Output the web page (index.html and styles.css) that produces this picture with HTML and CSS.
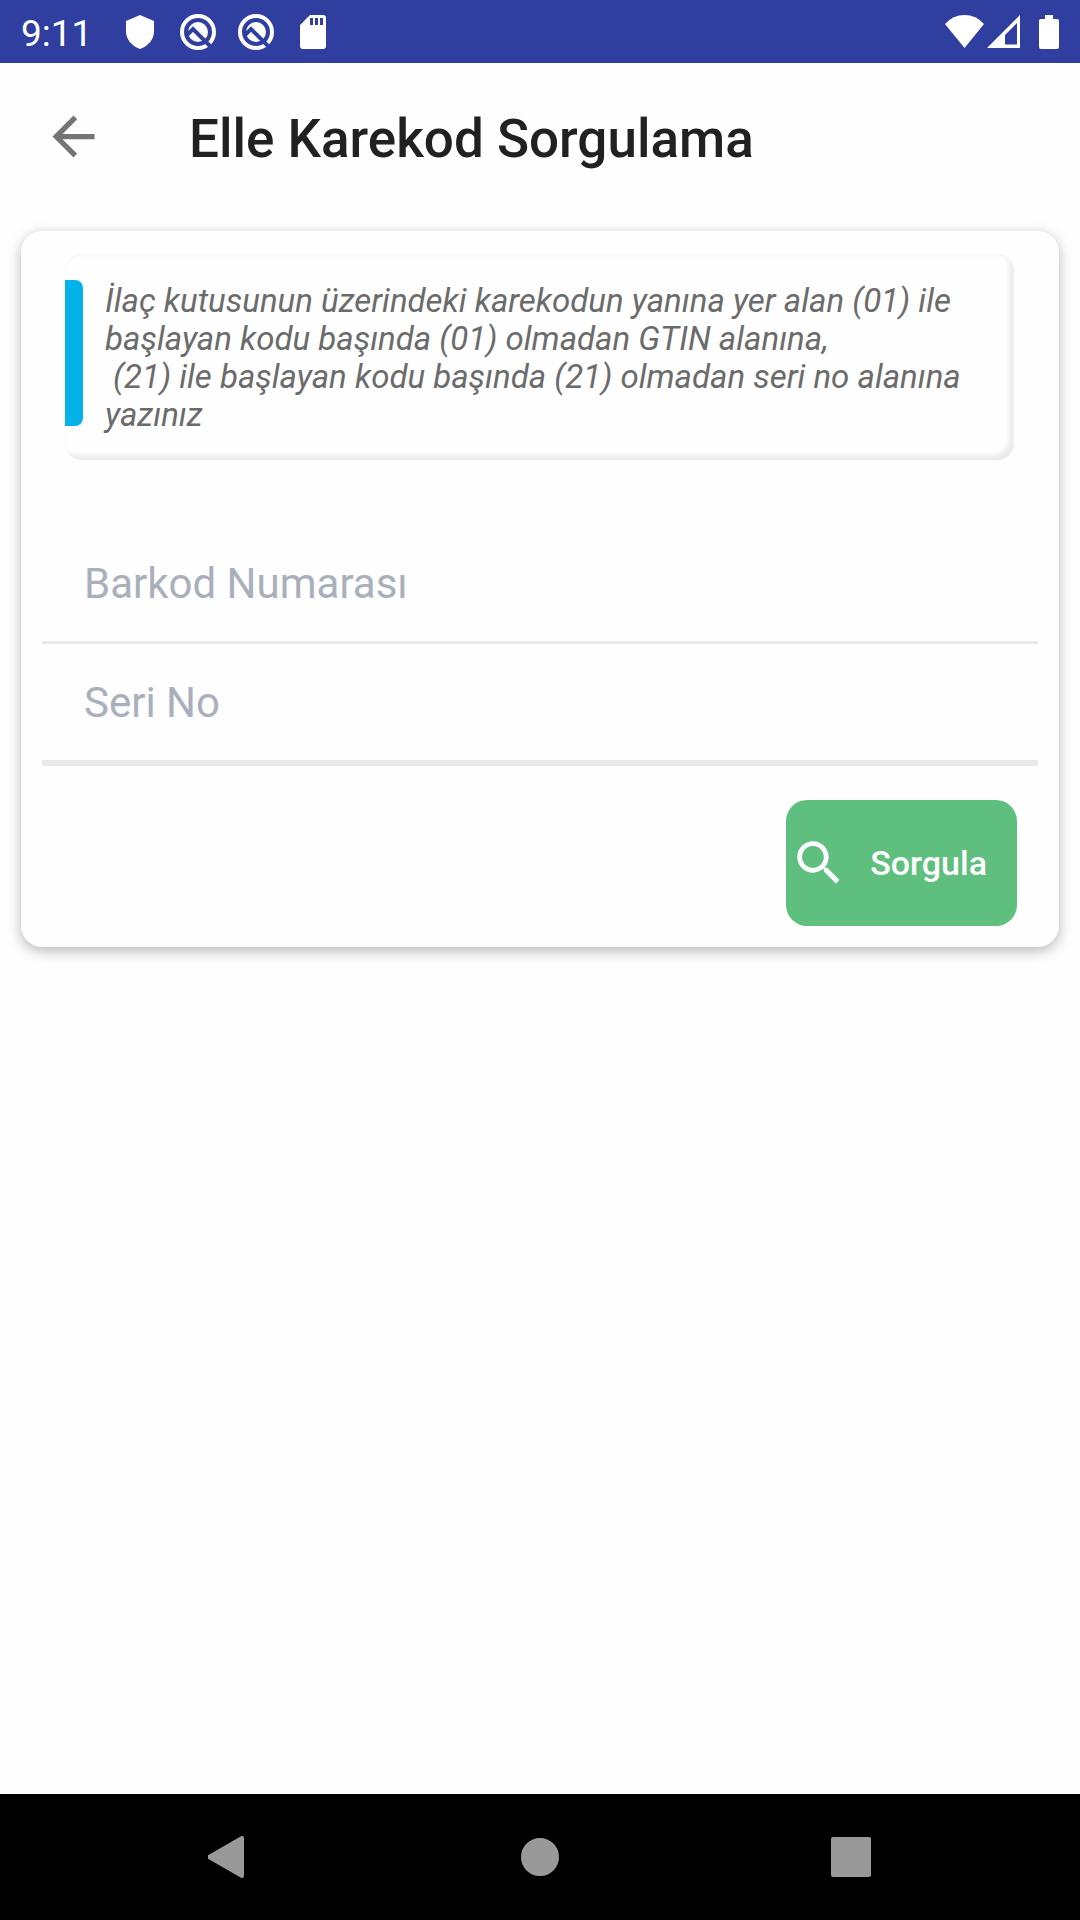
FILE: index.html
```html
<!DOCTYPE html>
<html lang="tr">
<head>
    <meta charset="UTF-8">
    <meta name="viewport" content="width=device-width, initial-scale=1.0">
    <title>Elle Karekod Sorgulama</title>
    <link rel="stylesheet" href="styles.css">
</head>
<body>
    <div class="status-bar">
        <span class="time">9:11</span>
        <div class="notifications">
            <svg width="28" height="34" viewBox="0 0 28 34"><path d="M14 0L28 6V16C28 25 22 31 14 34C6 31 0 25 0 16V6Z"/></svg>
            <svg width="36" height="36" viewBox="0 0 36 36">
                <circle class="ring" cx="18" cy="18" r="16"/>
                <circle cx="18" cy="18" r="10"/>
                <path class="cut" d="M7 21L13 15L32 34"/>
            </svg>
            <svg width="36" height="36" viewBox="0 0 36 36">
                <circle class="ring" cx="18" cy="18" r="16"/>
                <circle cx="18" cy="18" r="10"/>
                <path class="cut" d="M7 21L13 15L32 34"/>
            </svg>
            <svg width="26" height="34" viewBox="0 0 26 34"><path fill-rule="evenodd" d="M10 0H23Q26 0 26 3V31Q26 34 23 34H3Q0 34 0 31V10ZM10 3V10H13V3ZM15 3V10H18V3ZM20 3V10H23V3Z"/></svg>
        </div>
        <div class="system">
            <svg width="39" height="33" viewBox="0 0 39 33"><path d="M0 9Q8 0 19.500 0T39 9L19.500 33Z"/></svg>
            <svg width="33" height="33" viewBox="0 0 33 33"><path fill-rule="evenodd" d="M33 0V33H0ZM30 8L18 20V29.500H30Z"/></svg>
            <svg class="battery" width="20" height="34" viewBox="0 0 20 34"><path d="M6 0H14V4H18Q20 4 20 6V32Q20 34 18 34H2Q0 34 0 32V6Q0 4 2 4H6Z"/></svg>
        </div>
    </div>

    <header class="toolbar">
        <button class="back" type="button" aria-label="Geri">
            <svg width="63" height="63" viewBox="0 0 24 24"><path d="M20 11H7.830l5.590-5.590L12 4l-8 8 8 8 1.410-1.410L7.830 13H20v-2z"/></svg>
        </button>
        <h1>Elle Karekod Sorgulama</h1>
    </header>

    <main>
        <form class="card">
            <div class="info">
                <p>İlaç kutusunun üzerindeki karekodun yanına yer alan (01) ile başlayan kodu başında (01) olmadan GTIN alanına,<br>&nbsp;(21) ile başlayan kodu başında (21) olmadan seri no alanına yazınız</p>
            </div>
            <input class="field" type="text" name="barkod" placeholder="Barkod Numarası" aria-label="Barkod Numarası">
            <input class="field field-last" type="text" name="seri" placeholder="Seri No" aria-label="Seri No">
            <button class="submit" type="button">
                <svg width="58" height="58" viewBox="0 0 24 24"><path d="M15.500 14h-.790l-.280-.270C15.410 12.590 16 11.110 16 9.500 16 5.910 13.090 3 9.500 3S3 5.910 3 9.500 5.910 16 9.500 16c1.610 0 3.090-.590 4.230-1.570l.270.280v.790l5 4.990L20.490 19l-4.990-5zm-6 0C7.010 14 5 11.990 5 9.500S7.010 5 9.500 5 14 7.010 14 9.500 11.990 14 9.500 14z"/></svg>
                <span>Sorgula</span>
            </button>
        </form>
    </main>

    <nav class="nav-bar">
        <button type="button" aria-label="Geri">
            <svg width="42" height="42" viewBox="0 0 42 42"><path d="M34 2V40L1 21Z"/></svg>
        </button>
        <button type="button" aria-label="Ana ekran">
            <svg width="42" height="42" viewBox="0 0 42 42"><circle cx="21" cy="21" r="17"/></svg>
        </button>
        <button type="button" aria-label="Son uygulamalar">
            <svg width="42" height="42" viewBox="0 0 42 42"><rect x="3" y="3" width="36" height="36"/></svg>
        </button>
    </nav>
</body>
</html>
```
FILE: styles.css
```css
* {
    box-sizing: border-box;
}
body {
    margin: 0;
    min-height: 100vh;
    display: flex;
    flex-direction: column;
    background-color: #fefefe;
    font-family: Roboto, sans-serif;
}
svg {
    display: block;
    flex-shrink: 0;
}
button {
    padding: 0;
    border: none;
    background: none;
    font-family: inherit;
    cursor: pointer;
}

/* status bar */
.status-bar {
    display: flex;
    align-items: center;
    height: 63px;
    padding: 0 21px;
    background-color: #303f9f;
    color: white;
    fill: white;
}
.time {
    width: 105px;
    padding-top: 3px;
    font-size: 37px;
}
.notifications {
    display: flex;
    align-items: center;
    gap: 22px;
}
.notifications svg:first-child,
.notifications svg:nth-child(3) {
    margin-right: 4px;
}
.ring {
    fill: none;
    stroke: white;
    stroke-width: 4;
}
.cut {
    fill: none;
    stroke: #303f9f;
    stroke-width: 4;
}
.system {
    display: flex;
    align-items: center;
    gap: 3px;
    margin-left: auto;
}
.battery {
    margin-left: 16px;
}

/* toolbar */
.toolbar {
    display: flex;
    align-items: center;
    gap: 84px;
    height: 147px;
    padding: 0 42px;
}
.back {
    fill: #757575;
}
h1 {
    margin: 0;
    padding-top: 4px;
    font-size: 53px;
    font-weight: 500;
    color: #212121;
}

main {
    flex: 1;
    padding: 21px;
}
.card {
    display: flex;
    flex-direction: column;
    padding: 21px;
    border-radius: 21px;
    background-color: #fefefe;
    box-shadow: 0 4px 14px rgba(0, 0, 0, 0.28);
}
.info {
    display: flex;
    margin: 2px 24px 65px 23px;
    padding: 26px 20px 26px 0;
    border-radius: 16px;
    box-shadow: inset 0 2px 3px #f8f8f8, inset -5px -5px 4px #ebebeb;
}
.info::before {
    content: "";
    width: 18px;
    margin: 0 22px 8px 0;
    flex-shrink: 0;
    border-radius: 0 8px 8px 0;
    background-color: #03b2e8;
}
.info p {
    margin: 0;
    padding-top: 2px;
    font-size: 33px;
    line-height: 38px;
    font-style: italic;
    color: #6b6b6b;
}
.field {
    width: 100%;
    height: 119px;
    padding: 0 42px;
    border: none;
    border-bottom: 3px solid #e8e8e8;
    background: none;
    font-family: inherit;
    font-size: 42px;
    color: #212121;
    outline: none;
}
.field::placeholder {
    color: #a9b0bb;
    opacity: 1;
}
.field-last {
    height: 122px;
    border-bottom-width: 6px;
}
.submit {
    display: flex;
    align-items: center;
    align-self: flex-end;
    gap: 22px;
    height: 126px;
    margin: 34px 21px 0 0;
    padding: 0 30px 0 4px;
    border-radius: 21px;
    background-color: #5fbf7f;
    color: white;
    fill: white;
    font-size: 34px;
    font-weight: 500;
}

/* android navigation */
.nav-bar {
    display: flex;
    align-items: center;
    justify-content: space-between;
    height: 126px;
    padding: 0 208px;
    background-color: black;
}
.nav-bar svg {
    fill: #999;
    stroke: #999;
    stroke-width: 4;
    stroke-linejoin: round;
}
```
